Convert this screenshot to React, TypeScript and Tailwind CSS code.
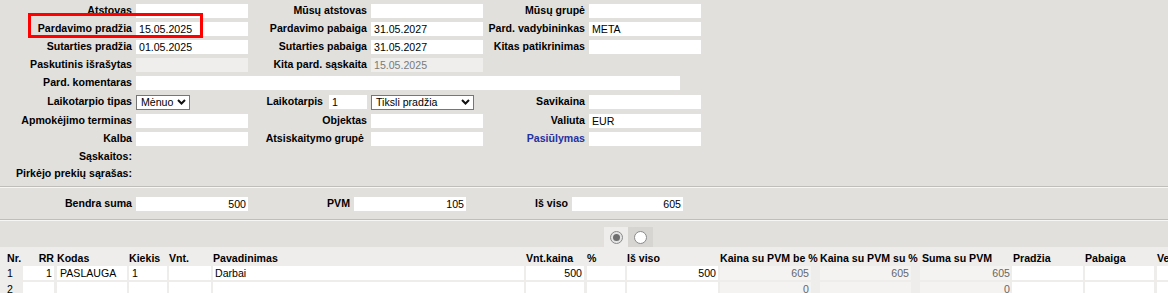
import clsx from "clsx";
import type { ReactNode } from "react";

function Label({ children, className }: { children?: ReactNode; className?: string }) {
  return (
    <div className={clsx("shrink-0 whitespace-nowrap text-right font-bold", className)}>
      {children}
    </div>
  );
}

function Field({
  children,
  className,
  muted,
}: {
  children?: ReactNode;
  className?: string;
  muted?: boolean;
}) {
  return (
    <div
      className={clsx(
        "h-[14px] shrink-0 whitespace-nowrap pl-[3px] leading-[14px]",
        muted ? "bg-[#efeeec] text-[#7a7a7a]" : "bg-white",
        className
      )}
    >
      {children}
    </div>
  );
}

function Select({ value, className }: { value: string; className?: string }) {
  return (
    <div
      className={clsx(
        "flex h-[15px] shrink-0 items-center justify-between border border-[#767676] bg-white pl-[4px] pr-[3px] leading-[13px]",
        className
      )}
    >
      <span>{value}</span>
      <svg width="9" height="6" viewBox="0 0 9 6">
        <polyline points="1,1 4.5,4.5 8,1" fill="none" stroke="#111" strokeWidth="2" />
      </svg>
    </div>
  );
}

function Separator() {
  return <div className="h-[2px] border-t border-b border-t-[#bfbebb] border-b-[#f6f6f5]" />;
}

const cols = [
  { key: "nr", wrap: "w-[23px]", cell: "", head: "Nr.", headCls: "pl-[7px]" },
  { key: "rr", wrap: "w-[34px]", cell: "w-[31px] bg-white text-right pr-[2px]", head: "RR", headCls: "w-[31px] text-right" },
  { key: "kodas", wrap: "w-[72px]", cell: "w-[70px] bg-white pl-[3px]", head: "Kodas", headCls: "" },
  { key: "kiekis", wrap: "w-[40px]", cell: "w-[38px] bg-white pl-[3px]", head: "Kiekis", headCls: "" },
  { key: "vnt", wrap: "w-[44px]", cell: "w-[42px] bg-white", head: "Vnt.", headCls: "" },
  { key: "pav", wrap: "w-[313px]", cell: "w-[311px] bg-white pl-[2px]", head: "Pavadinimas", headCls: "" },
  { key: "vkaina", wrap: "w-[61px]", cell: "w-[58px] bg-white text-right pr-[2px]", head: "Vnt.kaina", headCls: "" },
  { key: "proc", wrap: "w-[40px]", cell: "w-[38px] bg-white", head: "%", headCls: "" },
  { key: "isviso", wrap: "w-[93px]", cell: "w-[91px] bg-white text-right pr-[2px]", head: "Iš viso", headCls: "" },
  { key: "kbe", wrap: "w-[100px]", cell: "w-[91px] bg-[#f4f3f2] text-[#666] text-right pr-[2px]", head: "Kaina su PVM be %", headCls: "" },
  { key: "ksu", wrap: "w-[100px]", cell: "w-[91px] bg-[#f4f3f2] text-[#666] text-right pr-[2px]", head: "Kaina su PVM su %", headCls: "" },
  { key: "suma", wrap: "w-[92px]", cell: "w-[90px] bg-[#f4f3f2] text-[#666] text-right", head: "Suma su PVM", headCls: "pl-[2px]" },
  { key: "pradzia", wrap: "w-[73px]", cell: "w-[71px] bg-white", head: "Pradžia", headCls: "pl-[1px]" },
  { key: "pabaiga", wrap: "w-[72px]", cell: "w-[69px] bg-white", head: "Pabaiga", headCls: "" },
  { key: "ve", wrap: "w-[30px]", cell: "w-[30px] bg-white", head: "Ve", headCls: "" },
];

const rows: Record<string, string>[] = [
  { nr: "1", rr: "1", kodas: "PASLAUGA", kiekis: "1", pav: "Darbai", vkaina: "500", isviso: "500", kbe: "605", ksu: "605", suma: "605" },
  { nr: "2", kbe: "0", suma: "0" },
];

export default function App() {
  return (
    <div className="relative h-[293px] w-[1168px] overflow-hidden bg-[#e1e0dd] font-['Liberation_Sans',Arial,sans-serif] text-[10.6px] text-black">
      {/* top form */}
      <div className="pt-[2px]">
        <div className="flex h-[18px] items-center">
          <Label className="w-[132px]">Atstovas</Label>
          <Field className="ml-[4px] w-[112px]" />
          <Label className="w-[119px]">Mūsų atstovas</Label>
          <Field className="ml-[4px] w-[112px]" />
          <Label className="w-[102px]">Mūsų grupė</Label>
          <Field className="ml-[4px] w-[112px]" />
        </div>
        <div className="flex h-[18px] items-center">
          <Label className="w-[132px]">Pardavimo pradžia</Label>
          <Field className="ml-[4px] w-[112px]">15.05.2025</Field>
          <Label className="w-[119px]">Pardavimo pabaiga</Label>
          <Field className="ml-[4px] w-[112px]">31.05.2027</Field>
          <Label className="w-[102px]">Pard. vadybininkas</Label>
          <Field className="ml-[4px] w-[112px]">META</Field>
        </div>
        <div className="flex h-[18px] items-center">
          <Label className="w-[132px]">Sutarties pradžia</Label>
          <Field className="ml-[4px] w-[112px]">01.05.2025</Field>
          <Label className="w-[119px]">Sutarties pabaiga</Label>
          <Field className="ml-[4px] w-[112px]">31.05.2027</Field>
          <Label className="w-[102px]">Kitas patikrinimas</Label>
          <Field className="ml-[4px] w-[112px]" />
        </div>
        <div className="flex h-[18px] items-center">
          <Label className="w-[132px]">Paskutinis išrašytas</Label>
          <Field muted className="ml-[4px] w-[112px]" />
          <Label className="w-[119px]">Kita pard. sąskaita</Label>
          <Field muted className="ml-[4px] w-[112px]">15.05.2025</Field>
        </div>
        <div className="flex h-[18px] items-center">
          <Label className="w-[132px]">Pard. komentaras</Label>
          <Field className="ml-[4px] w-[544px]" />
        </div>
        <div className="flex h-[20px] items-center">
          <Label className="w-[132px]">Laikotarpio tipas</Label>
          <Select value="Mėnuo" className="ml-[4px] w-[54px]" />
          <div className="w-[58px] shrink-0" />
          <Label className="w-[75px]">Laikotarpis</Label>
          <Field className="ml-[6px] w-[38px]">1</Field>
          <Select value="Tiksli pradžia" className="ml-[4px] w-[103px]" />
          <div className="w-[9px] shrink-0" />
          <Label className="w-[102px]">Savikaina</Label>
          <Field className="ml-[4px] w-[112px]" />
        </div>
        <div className="flex h-[18px] items-center">
          <Label className="w-[132px]">Apmokėjimo terminas</Label>
          <Field className="ml-[4px] w-[112px]" />
          <Label className="w-[119px]">Objektas</Label>
          <Field className="ml-[4px] w-[112px]" />
          <Label className="w-[102px]">Valiuta</Label>
          <Field className="ml-[4px] w-[112px]">EUR</Field>
        </div>
        <div className="flex h-[18px] items-center">
          <Label className="w-[132px]">Kalba</Label>
          <Field className="ml-[4px] w-[112px]" />
          <Label className="w-[119px] pr-[3px]">Atsiskaitymo grupė</Label>
          <Field className="ml-[4px] w-[112px]" />
          <Label className="w-[102px] text-[#2431a0]">Pasiūlymas</Label>
          <Field className="ml-[4px] w-[112px]" />
        </div>
        <div className="flex h-[17px] items-center">
          <Label className="w-[132px]">Sąskaitos:</Label>
        </div>
        <div className="flex h-[17px] items-center">
          <Label className="w-[132px]">Pirkėjo prekių sąrašas:</Label>
        </div>
      </div>

      <div className="h-[4px]" />
      <Separator />

      {/* totals */}
      <div className="flex h-[31px] items-center">
        <Label className="w-[132px]">Bendra suma</Label>
        <Field className="ml-[4px] w-[112px] pr-[2px] text-right">500</Field>
        <Label className="w-[102px]">PVM</Label>
        <Field className="ml-[4px] w-[112px] pr-[2px] text-right">105</Field>
        <Label className="w-[102px]">Iš viso</Label>
        <Field className="ml-[4px] w-[111px] pr-[2px] text-right">605</Field>
      </div>

      <Separator />

      {/* view toggle */}
      <div className="flex h-[26px] items-end pl-[604px]">
        <div className="flex h-[20px] w-[24px] items-center justify-center bg-[#eeedeb]">
          <div className="flex h-[13px] w-[13px] items-center justify-center rounded-full border border-[#8a8a8a] bg-[#e4e4e4]">
            <div className="h-[7px] w-[7px] rounded-full bg-[#6e6e6e]" />
          </div>
        </div>
        <div className="flex h-[20px] w-[25px] items-center justify-center bg-[#d6d5d2]">
          <div className="h-[13px] w-[13px] rounded-full border border-[#8a8a8a] bg-white" />
        </div>
      </div>

      {/* rows table */}
      <div className="h-[46px] bg-[#eeedeb]">
        <div className="flex h-[19px] items-end">
          {cols.map((c) => (
            <div key={c.key} className={clsx("shrink-0 whitespace-nowrap font-bold leading-[16px]", c.wrap)}>
              <div className={c.headCls}>{c.head}</div>
            </div>
          ))}
        </div>
        {rows.map((r, i) => (
          <div key={i} className="flex h-[16px] items-start">
            {cols.map((c) => (
              <div key={c.key} className={clsx("shrink-0", c.wrap)}>
                {c.key === "nr" ? (
                  <div className="pl-[7px] leading-[14px]">{r.nr}</div>
                ) : (
                  <div className={clsx("h-[14px] whitespace-nowrap leading-[14px]", c.cell)}>
                    {r[c.key] ?? ""}
                  </div>
                )}
              </div>
            ))}
          </div>
        ))}
      </div>

      {/* highlight marker */}
      <div className="absolute left-[28px] top-[13px] h-[25px] w-[175px] border-[3px] border-[#ff0000]" />
    </div>
  );
}
